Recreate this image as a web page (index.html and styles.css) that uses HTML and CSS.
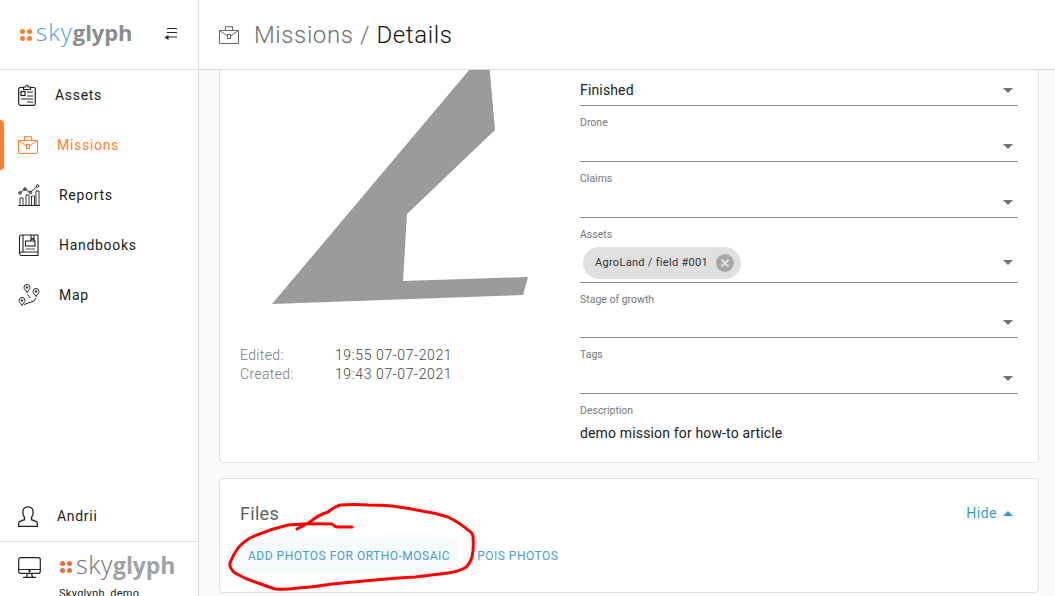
FILE: index.html
```html
<!DOCTYPE html>
<html lang="en">
<head>
<meta charset="utf-8">
<title>Missions / Details</title>
<link rel="stylesheet" href="styles.css">
</head>
<body>
<div class="app">
  <aside class="sidebar">
    <div class="brand">
      <div class="logo">
        <span class="dots"><i></i><i></i><i></i><i></i></span>
        <span class="logo-text"><span class="sky">sky</span><span class="glyph">glyph</span></span>
      </div>
      <svg class="toggle" width="14" height="14" viewBox="0 0 14 14" fill="none" stroke="#222" stroke-width="1.200"><path d="M3 2.500h10M3 6.500h10M4 11h9"/><path d="M0.500 11.500l4-2.500v5z" fill="#222" stroke="none"/></svg>
    </div>
    <nav class="nav">
      <a class="nav-item">
        <svg width="18" height="22" viewBox="0 0 18 22" fill="none" stroke="#222" stroke-width="1.200"><path d="M5.500 3.500H2.200Q.7 3.500.7 5v14.800q0 1.500 1.500 1.500h13.600q1.500 0 1.500-1.500V5q0-1.500-1.500-1.500h-3.300"/><path d="M5.500 5.500V3h2.200q.2-2 1.300-2t1.300 2h2.200v2.500z"/><rect x="3" y="7.500" width="4" height="4"/><path d="M9 8h6M9 12h6M3 15h12M9 18h6"/></svg>
        <span>Assets</span>
      </a>
      <a class="nav-item active">
        <svg class="case" width="20" height="18" viewBox="0 0 20 18" fill="none" stroke="currentColor" stroke-width="1"><path d="M.5 4.500h19v13H.5z"/><path d="M6.500 4.500V.7h7v3.800"/><path d="M.5 4.500l8 5.500M19.500 4.500l-8 5.500"/><rect x="8.500" y="8.500" width="3" height="4"/></svg>
        <span>Missions</span>
      </a>
      <a class="nav-item">
        <svg width="22" height="22" viewBox="0 0 22 22" fill="none" stroke="#222" stroke-width="1"><path d="M0 21.500h22"/><path d="M2 21v-7h3v7M8 21V11h3v10M13.500 21v-9h3v9M18 21V7h3v14" stroke-width=".9"/><path d="M2.500 8.500L7 5l5 3.500L18.500 3" stroke-width=".9"/><circle cx="2" cy="9" r="1.300"/><circle cx="7" cy="5" r="1.300"/><circle cx="12.500" cy="8.500" r="1.300"/><circle cx="19.500" cy="2" r="1.300"/></svg>
        <span>Reports</span>
      </a>
      <a class="nav-item">
        <svg width="22" height="22" viewBox="0 0 22 22" fill="none" stroke="#222" stroke-width="1.100"><path d="M1.500 19V3q0-2 2-2h16.500v17H3.500q-2 0-2 1.500t2 2H20v-3.500"/><path d="M5 1v17"/><rect x="7.500" y="7" width="9.500" height="5"/><path d="M13 1v5l1.500-1.500L16 6V1"/><path d="M7.500 15h9.500" stroke-width=".8"/></svg>
        <span>Handbooks</span>
      </a>
      <a class="nav-item">
        <svg width="22" height="22" viewBox="0 0 22 22" fill="none" stroke="#222" stroke-width="1"><path d="M9 8.500C7.500 6 6 5 6 3.500a3 3 0 0 1 6 0C12 5 10.500 6 9 8.500z"/><circle cx="9" cy="3.500" r=".8" fill="#222"/><path d="M18 12.500C16.500 10 15 9 15 7.500a3 3 0 0 1 6 0c0 1.500-1.500 2.500-3 5z"/><circle cx="18" cy="7.500" r=".8" fill="#222"/><path d="M4 21.500C2.500 19 1 18 1 16.500a3 3 0 0 1 6 0c0 1.500-1.500 2.500-3 5z"/><circle cx="4" cy="16.500" r=".8" fill="#222"/><path d="M6 20.500l10-3.500 2-3M9.500 10.500l3 3.500"/></svg>
        <span>Map</span>
      </a>
    </nav>
    <div class="spacer"></div>
    <a class="nav-item user">
      <svg width="20" height="21" viewBox="0 0 20 21" fill="none" stroke="#222" stroke-width="1.300"><path d="M6.500 11.500C5 9.500 4.800 7.500 4.800 6c0-3 2.200-5.200 5.200-5.200S15.200 3 15.200 6c0 1.500-.2 3.500-1.700 5.500v2.200l4.500 1.600q1.300.5 1.300 2v3H.7v-3q0-1.500 1.300-2l4.500-1.600z"/></svg>
      <span>Andrii</span>
    </a>
    <div class="org">
      <div class="org-row">
        <svg class="monitor" width="23" height="21" viewBox="0 0 23 21" fill="none" stroke="#222" stroke-width="1.200"><rect x=".7" y=".7" width="21.600" height="15.600" rx="2"/><path d="M.7 12.500h21.600M9.500 16.500l-1 3.500M13.500 16.500l1 3.500M5 20.300h13"/><circle cx="11.500" cy="14.300" r=".6" fill="#222"/></svg>
        <div class="logo logo-org">
          <span class="dots"><i></i><i></i><i></i><i></i></span>
          <span class="logo-text"><span class="sky">sky</span><span class="glyph">glyph</span></span>
        </div>
      </div>
      <div class="org-name">Skyglyph_demo</div>
    </div>
  </aside>

  <div class="page">
    <header class="topbar">
      <svg class="case head-icon" width="20" height="18" viewBox="0 0 20 18" fill="none" stroke="currentColor" stroke-width="1"><path d="M.5 4.500h19v13H.5z"/><path d="M6.500 4.500V.7h7v3.800"/><path d="M.5 4.500l8 5.500M19.500 4.500l-8 5.500"/><rect x="8.500" y="8.500" width="3" height="4"/></svg>
      <h1 class="crumbs"><span class="crumb-parent">Missions /</span> Details</h1>
    </header>
    <main class="content">
      <section class="card details">
        <div class="col-left">
          <svg class="shape" width="320" height="285" viewBox="0 0 320 285"><polygon fill="#9b9b9b" points="246,0 248,0 255,80 167,164 163,231 288,227 283,245 32,254"/></svg>
          <dl class="meta">
            <dt>Edited:</dt><dd>19:55 07-07-2021</dd>
            <dt>Created:</dt><dd>19:43 07-07-2021</dd>
          </dl>
        </div>
        <div class="col-right">
          <div class="field">
            <div class="label">Choose the state of the mission</div>
            <div class="control"><span class="value">Finished</span><i class="caret"></i></div>
          </div>
          <div class="field">
            <div class="label">Drone</div>
            <div class="control"><span></span><i class="caret"></i></div>
          </div>
          <div class="field">
            <div class="label">Claims</div>
            <div class="control"><span></span><i class="caret"></i></div>
          </div>
          <div class="field">
            <div class="label">Assets</div>
            <div class="control control-chip">
              <span class="chip">AgroLand / field #001
                <svg class="chip-x" width="18" height="18" viewBox="0 0 18 18"><circle cx="9" cy="9" r="9" fill="#a6a6a6"/><path d="M5.500 5.500l7 7M12.500 5.500l-7 7" stroke="#e0e0e0" stroke-width="2"/></svg>
              </span>
              <i class="caret"></i>
            </div>
          </div>
          <div class="field field-short">
            <div class="label">Stage of growth</div>
            <div class="control"><span></span><i class="caret"></i></div>
          </div>
          <div class="field">
            <div class="label">Tags</div>
            <div class="control"><span></span><i class="caret"></i></div>
          </div>
          <div class="field field-text">
            <div class="label">Description</div>
            <div class="desc">demo mission for how-to article</div>
          </div>
        </div>
      </section>
      <section class="card files">
        <div class="files-head">
          <h2 class="files-title">Files</h2>
          <a class="hide">Hide <i class="caret-up"></i></a>
        </div>
        <div class="tabs">
          <a class="tab tab-active">ADD PHOTOS FOR ORTHO-MOSAIC</a>
          <a class="tab">POIS PHOTOS</a>
        </div>
      </section>
    </main>
  </div>

  <svg class="scribble" width="1055" height="596" viewBox="0 0 1055 596" fill="none"><path stroke="#f00" stroke-width="3" stroke-linecap="round" stroke-linejoin="round" d="M297 529Q303 526 310 522 318 515 328 512 334 507 340 505 354 504 368 505 380 505 392 506 407 508 422 511 436 513 448 517 460 523 468 530 473 533 473 537 474 548 472 557 470 564 465 568 457 572 448 573 432 575 415 577 395 578 375 580 353 582 332 584 315 587 298 588 285 590 275 589 266 586 258 583 245 579 235 573 229 568 230 563 233 555 238 548 244 541 252 537 270 529 288 525 310 523 332 524 335 527 338 527H352"/></svg>
</div>
</body>
</html>
```

FILE: styles.css
```css
* { box-sizing: border-box; }
html, body { margin: 0; height: 100%; overflow: hidden; }
body { font-family: Roboto, "Liberation Sans", sans-serif; color: #212121; background: #fff; }

.app { position: relative; display: flex; width: 1055px; height: 596px; overflow: hidden; }

/* Sidebar */
.sidebar { display: flex; flex-direction: column; flex: 0 0 199px; height: 596px; border-right: 1px solid #dcdcdc; background: #fff; overflow: hidden; }
.brand { display: flex; align-items: center; justify-content: space-between; height: 70px; flex: none; padding: 0 20px; border-bottom: 1px solid #dcdcdc; }
.logo { display: flex; align-items: center; gap: 4px; }
.dots { display: grid; grid-template-columns: 5px 5px; gap: 2px; }
.dots i { width: 5px; height: 5px; border-radius: 50%; background: #ff7a2b; }
.logo-text { font-family: "Open Sans", sans-serif; line-height: 28px; margin-top: -3px; }
.sky { font-size: 24px; font-weight: 300; letter-spacing: 1px; color: #4aa3d4; }
.glyph { font-size: 22px; font-weight: 700; letter-spacing: -0.1px; color: #8a8d90; }
.toggle { margin-top: -3px; }

.nav { display: flex; flex-direction: column; }
.nav-item { position: relative; display: flex; align-items: center; gap: 19px; height: 50px; padding-left: 18px; font-size: 14px; letter-spacing: 0.7px; color: #212121; }
.nav-item.active { color: #ff7f32; }
.nav-item.active::before { content: ""; position: absolute; left: 0; top: 0; bottom: 0; width: 4px; background: #ff7f32; border-radius: 0 4px 4px 0; }
.spacer { flex: 1; }
.user { flex: none; height: 50px; }
.org { flex: none; height: 55px; border-top: 1px solid #dcdcdc; padding: 13px 0 0 18px; overflow: hidden; }
.org-row { display: flex; align-items: center; gap: 19px; height: 24px; }
.logo-org .dots i { background: #f26b3a; }
.logo-org .logo-text { margin-top: -2px; }
.logo-org .sky { font-size: 25px; letter-spacing: 0.6px; color: #6f7275; }
.logo-org .glyph { font-size: 23px; color: #a0a3a6; }
.org-name { margin: 8px 0 0 41px; font-size: 11px; line-height: 14px; letter-spacing: 0.3px; }

/* Page */
.page { flex: 1; display: flex; flex-direction: column; min-width: 0; height: 596px; }
.topbar { flex: none; display: flex; align-items: center; gap: 15px; height: 70px; padding-left: 20px; background: #fff; border-bottom: 1px solid #dcdcdc; position: relative; z-index: 1; }
.head-icon { color: #666; margin-top: 1px; }
.crumbs { margin: 0; font-size: 24px; font-weight: 300; letter-spacing: 0.6px; color: #111; }
.crumb-parent { color: #6f6f6f; }

.content { flex: 1; background: #fafafa; padding: 0 16px 0 20px; overflow: hidden; }
.card { background: #fff; border: 1px solid #e0e0e0; border-radius: 4px; }
.details { display: flex; margin-top: -41px; height: 434px; padding: 20px 20px 0 20px; }
.col-left { flex: 0 0 340px; }
.shape { display: block; }
.meta { display: grid; grid-template-columns: 95px 1fr; margin: 11px 0 0; font-size: 14px; line-height: 19px; letter-spacing: 0.35px; color: #777; }
.meta dt { font-weight: 300; }
.meta dd { margin: 0; font-weight: 300; letter-spacing: 0.6px; color: #444; }

.col-right { flex: 1; min-width: 0; }
.field { padding-top: 10px; }
.label { height: 13px; font-size: 10.5px; line-height: 13px; color: #777; }
.control { display: flex; align-items: center; justify-content: space-between; height: 33px; padding: 2px 5px 0 0; border-bottom: 1px solid #8c8c8c; }
.control-chip { height: 42px; }
.field-short .control { height: 32px; }
.value, .desc { font-size: 14px; letter-spacing: 0.15px; color: #212121; }
.desc { margin-top: 6px; line-height: 20px; }
.caret { width: 0; height: 0; border-left: 5px solid transparent; border-right: 5px solid transparent; border-top: 5px solid #757575; }
.chip { display: inline-flex; align-items: center; justify-content: space-between; width: 158px; height: 32px; margin-left: 3px; padding: 0 7px 0 12px; border-radius: 16px; background: #e0e0e0; font-size: 11px; letter-spacing: 0.3px; color: #333; }
.chip-x { flex: none; }

/* Files */
.files { margin-top: 15px; height: 115px; padding: 23px 25px 0 20px; }
.files-head { display: flex; align-items: center; justify-content: space-between; height: 22px; }
.files-title { margin: 0; font-size: 18px; font-weight: 400; letter-spacing: 0.3px; color: #5f5f5f; }
.hide { display: flex; align-items: center; gap: 6px; font-size: 14px; letter-spacing: 0.5px; color: #3a9bd5; }
.caret-up { width: 0; height: 0; border-left: 5px solid transparent; border-right: 5px solid transparent; border-bottom: 5px solid #3a9bd5; }
.tabs { display: flex; margin-top: 15px; }
.tab { display: flex; align-items: center; height: 33px; padding: 0 8px; font-size: 12px; letter-spacing: 0.5px; color: #4a9ccc; }
.tab-active { background: #f5fafd; border-radius: 3px; margin-right: 11px; }

/* Hand-drawn annotation on top of the screenshot */
.scribble { position: absolute; left: 0; top: 0; pointer-events: none; z-index: 2; }
```
